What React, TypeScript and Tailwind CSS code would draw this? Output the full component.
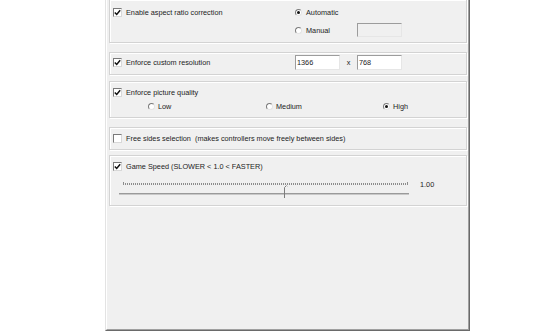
import React from "react";

function Check({ checked }: { checked: boolean }) {
  return (
    <span className="w-[9px] h-[9px] shrink-0 border border-t-[#7a7a7a] border-l-[#7a7a7a] border-r-[#d8d8d8] border-b-[#d8d8d8] bg-white flex items-center justify-center">
      {checked && (
        <svg width="7" height="7" viewBox="0 0 7 7">
          <path d="M0.8 3.4 L2.7 5.4 L6.2 1.2" stroke="#111" strokeWidth="1.5" fill="none" />
        </svg>
      )}
    </span>
  );
}

function Radio({ checked }: { checked: boolean }) {
  return (
    <span className="w-[7px] h-[7px] shrink-0 rounded-full border border-t-[#7a7a7a] border-l-[#7a7a7a] border-r-[#e4e4e4] border-b-[#e4e4e4] bg-white flex items-center justify-center">
      {checked && <span className="w-[3px] h-[3px] rounded-full bg-[#111]" />}
    </span>
  );
}

function CheckRow({ checked, label }: { checked: boolean; label: string }) {
  return (
    <div className="flex items-center h-[9px] pl-[3px] gap-[4px]">
      <Check checked={checked} />
      <span className="whitespace-pre">{label}</span>
    </div>
  );
}

function RadioLabel({ checked, label, gap = "gap-[4px]" }: { checked: boolean; label: string; gap?: string }) {
  return (
    <div className={`flex items-center h-[9px] ${gap}`}>
      <Radio checked={checked} />
      <span>{label}</span>
    </div>
  );
}

function TextBox({ value, disabled, h }: { value?: string; disabled?: boolean; h: string }) {
  return (
    <div
      className={`w-[45px] ${h} border border-t-[#9c9c9c] border-l-[#9c9c9c] border-r-[#e6e6e6] border-b-[#e6e6e6] ${
        disabled ? "bg-[#f0f0f0]" : "bg-white"
      } flex items-center pl-[1px]`}
    >
      {value}
    </div>
  );
}

const groupCls =
  "border border-[#d3d3d3] shadow-[inset_1px_1px_0_#ffffff,1px_1px_0_#ffffff]";

export default function App() {
  const ticks = Array.from({ length: 143 }, (_, i) => i * 2);
  return (
    <div
      className="w-[560px] h-[336px] bg-white overflow-hidden text-[7.3px] leading-[9px] text-[#1c1c1c]"
      style={{ fontFamily: '"Liberation Sans", Arial, sans-serif' }}
    >
      <div className="ml-[105px] w-[365px] border-l border-r border-b border-l-[#e3e3e3] border-r-[#6a6a6a] border-b-[#6a6a6a]">
        <div className="h-[331px] border-l border-r border-b border-l-white border-r-[#a0a0a0] border-b-[#a0a0a0] bg-[#f0f0f0] pl-[2px] pr-[1px]">
          {/* Group 1 */}
          <div className={`${groupCls} -mt-px h-[44px] flex`}>
            <div className="w-[185px] pt-[8px]">
              <CheckRow checked label="Enable aspect ratio correction" />
            </div>
            <div className="flex flex-col pt-[8px]">
              <RadioLabel checked label="Automatic" />
              <div className="flex items-center h-[14px] mt-[6px]">
                <div className="w-[62px]">
                  <RadioLabel checked={false} label="Manual" />
                </div>
                <TextBox disabled h="h-[14px]" />
              </div>
            </div>
          </div>

          {/* Group 2 */}
          <div className={`${groupCls} mt-[9px] h-[23px] pt-[2px]`}>
            <div className="flex items-center h-[15px]">
              <div className="w-[185px]">
                <CheckRow checked label="Enforce custom resolution" />
              </div>
              <TextBox value="1366" h="h-[15px]" />
              <div className="w-[17px] text-center">x</div>
              <TextBox value="768" h="h-[15px]" />
            </div>
          </div>

          {/* Group 3 */}
          <div className={`${groupCls} mt-[6px] h-[37px] pt-[6px]`}>
            <CheckRow checked label="Enforce picture quality" />
            <div className="flex mt-[5px] pl-[38px]">
              <div className="w-[118px]">
                <RadioLabel checked={false} label="Low" gap="gap-[3px]" />
              </div>
              <div className="w-[117px]">
                <RadioLabel checked={false} label="Medium" gap="gap-[3px]" />
              </div>
              <RadioLabel checked label="High" gap="gap-[3px]" />
            </div>
          </div>

          {/* Group 4 */}
          <div className={`${groupCls} mt-[9px] h-[23px] pt-[6px]`}>
            <CheckRow
              checked={false}
              label="Free sides selection  (makes controllers move freely between sides)"
            />
          </div>

          {/* Group 5 */}
          <div className={`${groupCls} mt-[5px] h-[51px] pt-[6px]`}>
            <CheckRow checked label="Game Speed (SLOWER < 1.0 < FASTER)" />
            <div className="flex mt-[9px] pl-[9px]">
              <div className="relative w-[290px] pt-[2px]">
                <svg width="286" height="3" className="ml-[4px] block">
                  {ticks.map((x) => (
                    <line
                      key={x}
                      x1={x + 0.5}
                      x2={x + 0.5}
                      y1={x === 0 || x === 284 ? 0 : 1}
                      y2={3}
                      stroke="#8c8c8c"
                      strokeWidth="1"
                    />
                  ))}
                </svg>
                <div className="mt-[8px] h-[2px] bg-[#9a9a9a] border-b border-b-[#c8c8c8]" />
                <svg width="5" height="14" className="absolute left-[164px] top-[5px]">
                  <path d="M3.5 0.5 L1.5 2.5 L1.5 13" stroke="#7c7c7c" strokeWidth="1" fill="none" />
                  <path d="M3.5 0.5 L4.5 1.5" stroke="#b0b0b0" strokeWidth="1" fill="none" />
                </svg>
              </div>
              <div className="ml-[11px]">1.00</div>
            </div>
          </div>
        </div>
      </div>
    </div>
  );
}
